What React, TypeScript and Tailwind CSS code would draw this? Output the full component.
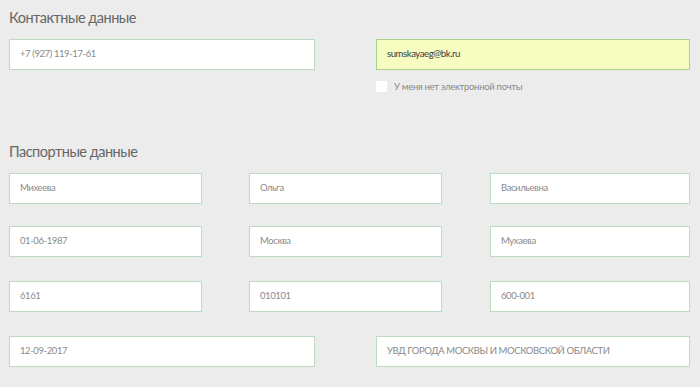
import { FC } from "react";

type FieldProps = {
  value: string;
  width: string;
  highlighted?: boolean;
};

const Field: FC<FieldProps> = ({ value, width, highlighted }) => {
  return (
    <div
      className={`${width} h-[31px] flex items-center pl-[10px] border text-[9.5px] tracking-[-0.4px] ${
        highlighted
          ? "bg-[#f7fcc1] border-[#aad28f] text-[#3a3a3a]"
          : "bg-white border-[#bcdcc2] text-[#8a8a8a]"
      }`}
    >
      {value}
    </div>
  );
};

export default function App() {
  return (
    <div
      className="w-[700px] h-[387px] bg-[#ececec] pl-[9px] pt-[8px] overflow-hidden"
      style={{ fontFamily: 'Lato, "Noto Sans", sans-serif' }}
    >
      <h2 className="text-[14.5px] tracking-[-0.5px] leading-[20px] text-[#666666]">Контактные данные</h2>
      <div className="flex mt-[11px]">
        <Field value="+7 (927) 119-17-61" width="w-[306px]" />
        <div className="ml-[61px] flex flex-col">
          <Field value="sumskayaeg@bk.ru" width="w-[314px]" highlighted />
          <label className="flex items-center mt-[11px]">
            <span className="w-[11px] h-[11px] bg-white" />
            <span className="ml-[7px] text-[9.5px] tracking-[-0.3px] leading-[11px] text-[#8a8a8a]">
              У меня нет электронной почты
            </span>
          </label>
        </div>
      </div>

      <h2 className="mt-[50px] text-[14.5px] tracking-[-0.5px] leading-[20px] text-[#666666]">Паспортные данные</h2>
      <div className="flex mt-[11px]">
        <Field value="Михеева" width="w-[193px]" />
        <div className="ml-[47px]">
          <Field value="Ольга" width="w-[193px]" />
        </div>
        <div className="ml-[48px]">
          <Field value="Васильевна" width="w-[200px]" />
        </div>
      </div>
      <div className="flex mt-[22px]">
        <Field value="01-06-1987" width="w-[193px]" />
        <div className="ml-[47px]">
          <Field value="Москва" width="w-[193px]" />
        </div>
        <div className="ml-[48px]">
          <Field value="Мухаева" width="w-[200px]" />
        </div>
      </div>
      <div className="flex mt-[24px]">
        <Field value="6161" width="w-[193px]" />
        <div className="ml-[47px]">
          <Field value="010101" width="w-[193px]" />
        </div>
        <div className="ml-[48px]">
          <Field value="600-001" width="w-[200px]" />
        </div>
      </div>
      <div className="flex mt-[24px]">
        <Field value="12-09-2017" width="w-[306px]" />
        <div className="ml-[61px]">
          <Field value="УВД ГОРОДА МОСКВЫ И МОСКОВСКОЙ ОБЛАСТИ" width="w-[314px]" />
        </div>
      </div>
    </div>
  );
}
